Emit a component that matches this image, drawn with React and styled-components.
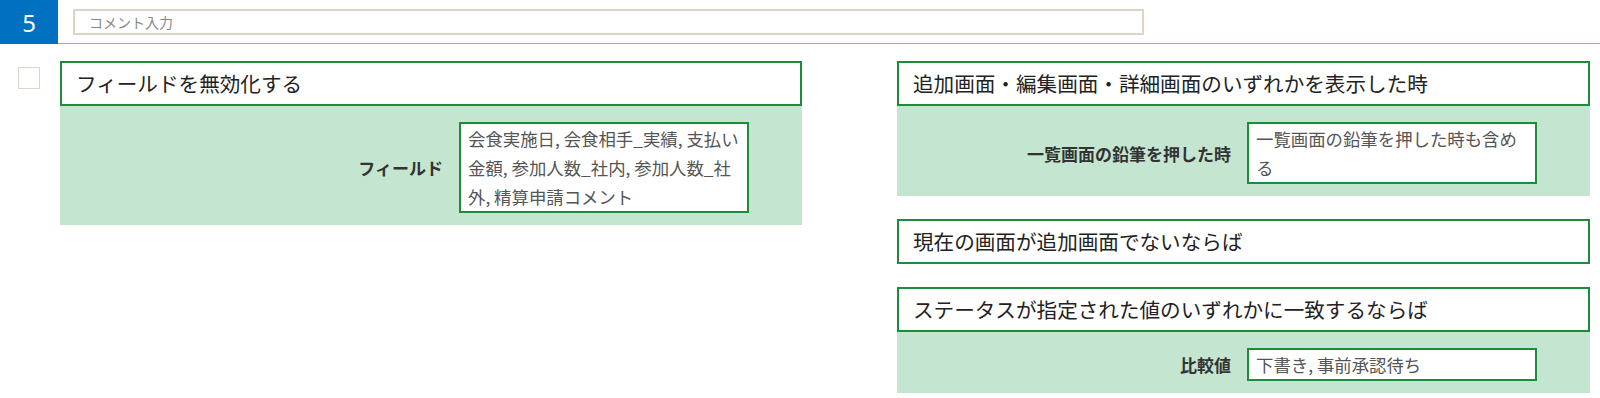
import React from "react";
import styled, { createGlobalStyle } from "styled-components";

const Global = createGlobalStyle`
  html, body { margin: 0; padding: 0; background: #fff; }
  body { font-family: "Noto Sans CJK JP", "Noto Sans", sans-serif; color: #222; }
  * { box-sizing: border-box; }
`;

const Page = styled.div`
  width: 1600px;
  height: 398px;
  overflow: hidden;
  display: flex;
  flex-direction: column;
`;

const Header = styled.div`
  display: flex;
  height: 44px;
`;

const NumberCell = styled.div`
  width: 58px;
  height: 44px;
  background: #0070c0;
  color: #fff;
  font-size: 24px;
  display: flex;
  align-items: center;
  justify-content: center;
  font-family: "Noto Sans", sans-serif;
`;

const HeaderRest = styled.div`
  flex: 1;
  border-bottom: 1.5px solid #8faadc;
  padding: 9px 0 0 15px;
`;

const CommentInput = styled.div`
  width: 1071px;
  height: 26px;
  border: 2px solid #ddd3c6;
  color: #8a8a8a;
  font-size: 14px;
  line-height: 22px;
  padding-left: 14px;
`;

const Content = styled.div`
  display: flex;
  align-items: flex-start;
  padding: 17px 0 0 18px;
`;

const Checkbox = styled.div`
  width: 22px;
  height: 22px;
  border: 1.5px solid #ddd3c6;
  margin-top: 6px;
  flex: none;
`;

const ActionColumn = styled.div`
  width: 742px;
  margin-left: 20px;
  flex: none;
`;

const ConditionColumn = styled.div`
  width: 693px;
  margin-left: 95px;
  display: flex;
  flex-direction: column;
  gap: 23px;
  flex: none;
`;

const Block = styled.div`
  display: flex;
  flex-direction: column;
`;

const Title = styled.div`
  height: 45px;
  border: 2px solid #1e8c3a;
  background: #fff;
  font-size: 20.6px;
  line-height: 41px;
  padding-left: 14px;
  color: #222;
  white-space: nowrap;
`;

const Body = styled.div`
  background: #c4e5cf;
  padding: 16px 53px 12px 0;
  display: flex;
  justify-content: flex-end;
  align-items: center;
  gap: 16px;
`;

const Label = styled.div`
  font-size: 17px;
  font-weight: 700;
  color: #333;
  white-space: nowrap;
`;

const Value = styled.div`
  width: 290px;
  border: 2px solid #1e8c3a;
  background: #fff;
  color: #555;
  font-size: 17.4px;
  line-height: 29px;
  padding: 0 6px 0 7px;
`;

function Condition({ title, label, value }) {
  return (
    <Block>
      <Title>{title}</Title>
      {label && (
        <Body>
          <Label>{label}</Label>
          <Value>{value}</Value>
        </Body>
      )}
    </Block>
  );
}

export default function App() {
  return (
    <Page>
      <Global />
      <Header>
        <NumberCell>5</NumberCell>
        <HeaderRest>
          <CommentInput>コメント入力</CommentInput>
        </HeaderRest>
      </Header>
      <Content>
        <Checkbox />
        <ActionColumn>
          <Condition
            title="フィールドを無効化する"
            label="フィールド"
            value="会食実施日, 会食相手_実績, 支払い金額, 参加人数_社内, 参加人数_社外, 精算申請コメント"
          />
        </ActionColumn>
        <ConditionColumn>
          <Condition
            title="追加画面・編集画面・詳細画面のいずれかを表示した時"
            label="一覧画面の鉛筆を押した時"
            value="一覧画面の鉛筆を押した時も含める"
          />
          <Condition title="現在の画面が追加画面でないならば" />
          <Condition
            title="ステータスが指定された値のいずれかに一致するならば"
            label="比較値"
            value="下書き, 事前承認待ち"
          />
        </ConditionColumn>
      </Content>
    </Page>
  );
}
